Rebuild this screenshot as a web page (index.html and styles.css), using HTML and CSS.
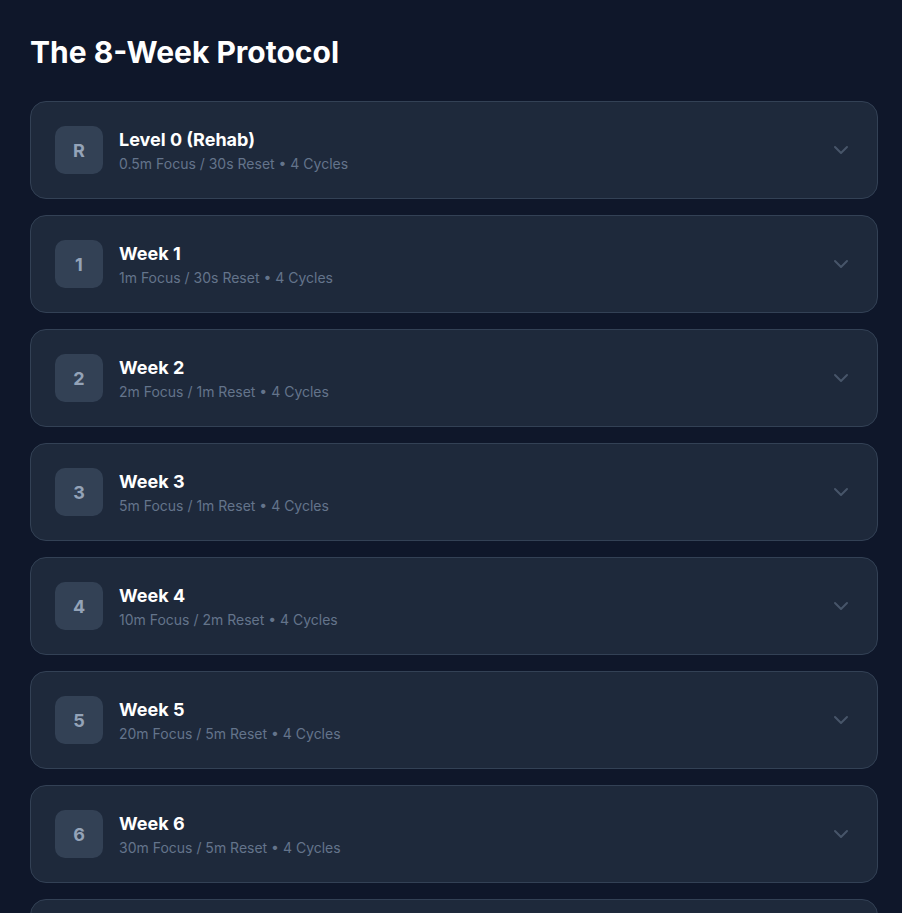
FILE: index.html
```html
<!DOCTYPE html>
<html lang="en">
<head>
  <meta charset="UTF-8">
  <meta name="viewport" content="width=device-width, initial-scale=1.0">
  <title>The 8-Week Protocol</title>
  <link rel="stylesheet" href="styles.css">
</head>
<body>
  <div class="page">
    <h1 class="title">The 8-Week Protocol</h1>
    <div class="levels">
      <div class="level">
        <div class="badge">R</div>
        <div class="info">
          <div class="name">Level 0 (Rehab)</div>
          <div class="meta">0.5m Focus / 30s Reset • 4 Cycles</div>
        </div>
        <svg class="chevron" viewBox="0 0 24 24"><path d="M6 9l6 6 6-6"/></svg>
      </div>
      <div class="level">
        <div class="badge">1</div>
        <div class="info">
          <div class="name">Week 1</div>
          <div class="meta">1m Focus / 30s Reset • 4 Cycles</div>
        </div>
        <svg class="chevron" viewBox="0 0 24 24"><path d="M6 9l6 6 6-6"/></svg>
      </div>
      <div class="level">
        <div class="badge">2</div>
        <div class="info">
          <div class="name">Week 2</div>
          <div class="meta">2m Focus / 1m Reset • 4 Cycles</div>
        </div>
        <svg class="chevron" viewBox="0 0 24 24"><path d="M6 9l6 6 6-6"/></svg>
      </div>
      <div class="level">
        <div class="badge">3</div>
        <div class="info">
          <div class="name">Week 3</div>
          <div class="meta">5m Focus / 1m Reset • 4 Cycles</div>
        </div>
        <svg class="chevron" viewBox="0 0 24 24"><path d="M6 9l6 6 6-6"/></svg>
      </div>
      <div class="level">
        <div class="badge">4</div>
        <div class="info">
          <div class="name">Week 4</div>
          <div class="meta">10m Focus / 2m Reset • 4 Cycles</div>
        </div>
        <svg class="chevron" viewBox="0 0 24 24"><path d="M6 9l6 6 6-6"/></svg>
      </div>
      <div class="level">
        <div class="badge">5</div>
        <div class="info">
          <div class="name">Week 5</div>
          <div class="meta">20m Focus / 5m Reset • 4 Cycles</div>
        </div>
        <svg class="chevron" viewBox="0 0 24 24"><path d="M6 9l6 6 6-6"/></svg>
      </div>
      <div class="level">
        <div class="badge">6</div>
        <div class="info">
          <div class="name">Week 6</div>
          <div class="meta">30m Focus / 5m Reset • 4 Cycles</div>
        </div>
        <svg class="chevron" viewBox="0 0 24 24"><path d="M6 9l6 6 6-6"/></svg>
      </div>
      <div class="level">
        <div class="badge">7</div>
        <div class="info">
          <div class="name">Week 7</div>
          <div class="meta">45m Focus / 5m Reset • 4 Cycles</div>
        </div>
        <svg class="chevron" viewBox="0 0 24 24"><path d="M6 9l6 6 6-6"/></svg>
      </div>
    </div>
  </div>
</body>
</html>
```

FILE: styles.css
```css
body {
  margin: 0;
  padding: 0;
  background-color: #0f172a;
  color: #ffffff;
  font-family: Inter, "Noto Sans", sans-serif;
}
.page {
  padding: 34px 24px 30px 30px;
}
.title {
  margin: 0 0 31px 0;
  font-size: 30px;
  line-height: 36px;
  font-weight: 700;
}
.levels {
  display: flex;
  flex-direction: column;
  gap: 16px;
}
.level {
  display: flex;
  align-items: center;
  gap: 16px;
  padding: 24px;
  background-color: #1e293b;
  border: 1px solid #334155;
  border-radius: 16px;
}
.badge {
  width: 48px;
  height: 48px;
  flex-shrink: 0;
  border-radius: 10px;
  background-color: #334155;
  color: #94a3b8;
  display: flex;
  align-items: center;
  justify-content: center;
  font-size: 18px;
  font-weight: 700;
}
.info {
  flex: 1;
}
.name {
  font-size: 18px;
  line-height: 28px;
  font-weight: 700;
}
.meta {
  font-size: 14px;
  line-height: 20px;
  color: #64748b;
}
.chevron {
  width: 24px;
  height: 24px;
  fill: none;
  stroke: #475569;
  stroke-width: 2;
  stroke-linecap: round;
  stroke-linejoin: round;
}
```
